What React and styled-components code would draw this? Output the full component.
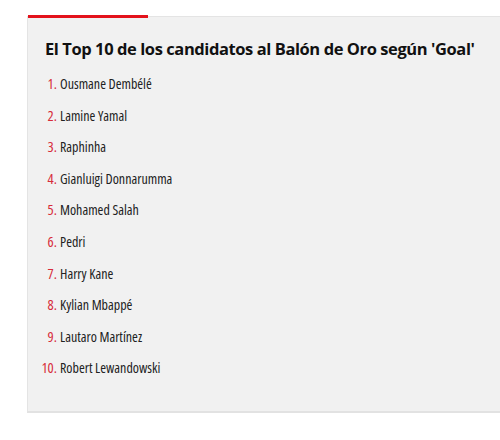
import styled, { createGlobalStyle } from 'styled-components'

const players = [
  'Ousmane Dembélé',
  'Lamine Yamal',
  'Raphinha',
  'Gianluigi Donnarumma',
  'Mohamed Salah',
  'Pedri',
  'Harry Kane',
  'Kylian Mbappé',
  'Lautaro Martínez',
  'Robert Lewandowski',
]

const GlobalStyle = createGlobalStyle`
  body {
    margin: 0;
    background: #fff;
    font-family: "Open Sans", "Liberation Sans", Arial, sans-serif;
  }
`

export default function App() {
  return (
    <Page>
      <GlobalStyle />
      <Card>
        <Title>El Top 10 de los candidatos al Balón de Oro según 'Goal'</Title>
        <List>
          {players.map((name, i) => (
            <Item key={name}>
              <Num>{i + 1}.</Num>
              <Name>{name}</Name>
            </Item>
          ))}
        </List>
      </Card>
    </Page>
  )
}

const Page = styled.div`
  padding: 16px 0 0 27px;
`

const Card = styled.div`
  position: relative;
  height: 397px;
  background: #f1f1f1;
  border-top: 1px solid #e4e4e4;
  border-left: 1px solid #e4e4e4;
  border-bottom: 2px solid #e2e2e2;
  box-sizing: border-box;
  padding: 21px 0 0 17px;
  &::before {
    content: '';
    position: absolute;
    top: -2px;
    left: 0;
    width: 120px;
    height: 3px;
    background: #e3121b;
  }
`

const Title = styled.h2`
  margin: 0 0 8px;
  font-size: 16.5px;
  font-weight: 700;
  font-stretch: 88%;
  line-height: 22px;
  color: #111;
  letter-spacing: -0.42px;
`

const List = styled.ol`
  list-style: none;
  margin: 0 0 0 -5px;
  padding: 0;
  display: flex;
  flex-direction: column;
`

const Item = styled.li`
  display: flex;
  align-items: baseline;
  height: 31.6px;
  line-height: 31.6px;
  font-size: 14px;
  font-stretch: 80%;
  color: #222;
`

const Num = styled.span`
  display: flex;
  justify-content: flex-end;
  width: 20px;
  flex-shrink: 0;
  padding-right: 3px;
  box-sizing: border-box;
  white-space: nowrap;
  font-size: 14.5px;
  font-stretch: 82%;
  color: #d72c3a;
`

const Name = styled.span``
